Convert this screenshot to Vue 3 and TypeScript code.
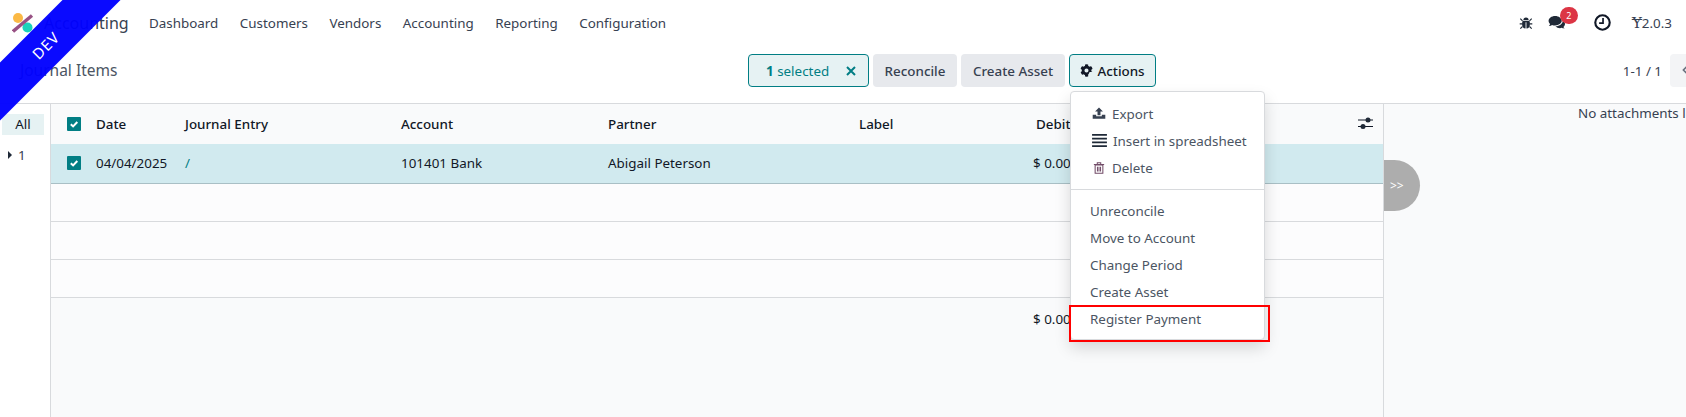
<script setup lang="ts">
const menu = ['Dashboard', 'Customers', 'Vendors', 'Accounting', 'Reporting', 'Configuration']
const emptyRows = [1, 2, 3]
const lowerActions = ['Unreconcile', 'Move to Account', 'Change Period', 'Create Asset', 'Register Payment']
</script>

<template>
  <div class="page">
    <div class="ribbon">DEV</div>

    <header class="navbar">
      <svg class="logo" viewBox="0 0 22 22" width="22" height="22">
        <circle cx="6" cy="6" r="5" fill="#fbb945" />
        <circle cx="15.5" cy="15.5" r="5" fill="#1ad3bb" />
        <path d="M1 19.5 20 3.5" stroke="#985184" stroke-width="3.4" />
      </svg>
      <span class="app-name">Accounting</span>
      <nav class="menu">
        <a v-for="item in menu" :key="item">{{ item }}</a>
      </nav>
      <div class="systray">
        <svg class="bug" viewBox="0 0 16 16" width="14" height="14">
          <path d="M5 4.6a3 3 0 0 1 6 0zM4.2 5.5h7.6c.5 1 .7 2.2.7 3.5 0 2.8-1.3 5-4 5.3V7H7.5v7.3c-2.7-.3-4-2.500-4-5.300 0-1.300.2-2.500.7-3.500z" fill="#1f2937" />
          <path d="M1.500 3 4 5.500M14.500 3 12 5.500M.8 9h3M15.200 9h-3M1.500 14.500 4 12M14.500 14.500 12 12" stroke="#1f2937" stroke-width="1.300" fill="none" />
        </svg>
        <span class="chat">
          <svg viewBox="0 0 20 16" width="19" height="15">
            <path d="M7.500 1C3.600 1 .5 3.300.5 6.200c0 1.300.6 2.400 1.600 3.300-.2.900-.8 1.700-1.300 2.300 1.300 0 2.500-.6 3.300-1.200 1.100.4 2.300.6 3.400.6 3.900 0 7-2.300 7-5C14.500 3.300 11.400 1 7.500 1z" fill="#1f2937" />
            <path d="M15.800 5.500c.1 3.600-3.500 6.300-8 6.500 1.200 1.300 3 2 4.800 2 .7 0 1.400-.1 2-.3.700.5 1.800 1 3 1-.5-.5-1-1.200-1.200-2 1-.8 1.600-1.900 1.600-3 0-1.700-.9-3.100-2.200-4.200z" fill="#1f2937" />
          </svg>
          <b class="badge">2</b>
        </span>
        <svg class="clock" viewBox="0 0 16 16" width="17" height="17">
          <circle cx="8" cy="8" r="6.800" fill="none" stroke="#111827" stroke-width="2" />
          <path d="M8.500 3.800v4.800H4.800" fill="none" stroke="#111827" stroke-width="1.600" />
        </svg>
        <span class="version"><i>Ɏ</i>2.0.3</span>
      </div>
    </header>

    <section class="control-panel">
      <div class="breadcrumb">Journal Items</div>
      <div class="actions-bar">
        <div class="selected-box">
          <span><b>1</b> selected</span>
          <svg viewBox="0 0 10 10" width="10" height="10">
            <path d="M1 1l8 8M9 1 1 9" stroke="#017e84" stroke-width="2" />
          </svg>
        </div>
        <button class="btn btn-reconcile">Reconcile</button>
        <button class="btn btn-asset">Create Asset</button>
        <button class="btn btn-actions">
          <svg viewBox="0 0 512 512" width="13" height="13">
            <path d="M487 315l-42-25a190 190 0 0 0 0-68l42-25c5-3 7-9 5-14-11-35-30-67-54-93-4-4-10-5-15-2l-42 24a187 187 0 0 0-59-34V30c0-6-4-11-9-12a223 223 0 0 0-107 0c-5 1-9 6-9 12v48a193 193 0 0 0-59 34l-42-24c-5-3-11-2-15 2-24 26-43 58-54 93-2 5 0 11 5 14l42 25a190 190 0 0 0 0 68l-42 25c-5 3-7 9-5 14 11 35 30 67 54 93 4 4 10 5 15 2l42-24a187 187 0 0 0 59 34v48c0 6 4 11 9 12a223 223 0 0 0 107 0c5-1 9-6 9-12v-48a193 193 0 0 0-59-34l42 24c5 3 11 2 15-2 24-26 43-58 54-93 2-5 0-11-5-14zM256 336a80 80 0 1 1 0-160 80 80 0 0 1 0 160z" fill="#111827" />
          </svg>
          Actions
        </button>
      </div>
      <div class="pager">
        <span>1-1 / 1</span>
        <button class="pager-btn">
          <svg viewBox="0 0 8 12" width="7" height="10">
            <path d="M6.500 1 1.500 6l5 5" fill="none" stroke="#6b7280" stroke-width="2" />
          </svg>
        </button>
      </div>
    </section>

    <main class="content">
      <aside class="search-panel">
        <div class="panel-all">All</div>
        <div class="panel-item"><span class="caret"></span>1</div>
      </aside>

      <div class="list">
        <div class="row head">
          <span class="check"><svg viewBox="0 0 14 14" width="14" height="14"><path d="M3.800 7.200l2.300 2.200 4.200-4.400" fill="none" stroke="#fff" stroke-width="2" /></svg></span>
          <span>Date</span>
          <span>Journal Entry</span>
          <span>Account</span>
          <span>Partner</span>
          <span>Label</span>
          <span>Debit</span>
          <svg class="sliders" viewBox="0 0 15 14" width="15" height="14">
            <path d="M0 4h15M0 10.500h15" stroke="#111827" stroke-width="1" />
            <circle cx="10" cy="4" r="2.500" fill="#1f2937" />
            <circle cx="5" cy="10.500" r="2.500" fill="#1f2937" />
          </svg>
        </div>
        <div class="row selected">
          <span class="check"><svg viewBox="0 0 14 14" width="14" height="14"><path d="M3.800 7.200l2.300 2.200 4.200-4.400" fill="none" stroke="#fff" stroke-width="2" /></svg></span>
          <span>04/04/2025</span>
          <span class="link">/</span>
          <span>101401 Bank</span>
          <span>Abigail Peterson</span>
          <span></span>
          <span class="amount">$ 0.00</span>
        </div>
        <div v-for="n in emptyRows" :key="n" class="row empty"></div>
        <div class="row totals">
          <span></span><span></span><span></span><span></span><span></span><span></span>
          <span class="amount">$ 0.00</span>
        </div>
      </div>

      <aside class="attachments">
        <div class="no-attachments">No attachments loaded</div>
        <div class="toggle">&gt;&gt;</div>
      </aside>
    </main>

    <div class="dropdown">
      <a class="dd-item">
        <svg viewBox="0 0 16 14" width="14" height="13">
          <path d="M8 0l4.500 4.800H9.700V9H6.300V4.800H3.500zM.8 8.500h4v1.700h6.400V8.500h4V13H.8z" fill="#374151" />
        </svg>
        Export
      </a>
      <a class="dd-item">
        <svg viewBox="0 0 16 14" width="15" height="13">
          <path d="M0 1h16M0 5h16M0 9h16M0 13h16" stroke="#1f2937" stroke-width="2" />
        </svg>
        Insert in spreadsheet
      </a>
      <a class="dd-item">
        <svg viewBox="0 0 14 14" width="14" height="12">
          <path d="M2.500 3.500h9V13h-9zM1 3h12M5 3V1h4v2M5.200 5.500V11M7 5.500V11M8.800 5.500V11" fill="none" stroke="#714b67" stroke-width="1.200" />
        </svg>
        Delete
      </a>
      <div class="dd-divider"></div>
      <a v-for="item in lowerActions" :key="item" class="dd-item plain">{{ item }}</a>
    </div>

    <div class="highlight"></div>
  </div>
</template>

<style>
html, body {
  margin: 0;
  background: #fff;
}
</style>

<style scoped>
.page {
  position: relative;
  width: 1686px;
  height: 417px;
  overflow: hidden;
  display: flex;
  flex-direction: column;
  background: #fff;
  color: #374151;
  font-family: "Noto Sans", sans-serif;
  font-size: 13.4px;
}

.ribbon {
  position: absolute;
  top: 25px;
  left: -74px;
  width: 240px;
  height: 41px;
  line-height: 41px;
  text-align: center;
  background: rgba(0, 0, 255, 0.96);
  color: #fff;
  font-size: 15px;
  letter-spacing: 1px;
  transform: rotate(-45deg);
  z-index: 5;
}

.navbar {
  height: 45px;
  flex: none;
  display: flex;
  align-items: center;
  padding-left: 12px;
}

.logo {
  flex: none;
}

.app-name {
  margin-left: 10px;
  width: 105px;
  font-size: 16px;
}

.menu {
  display: flex;
  gap: 21.5px;
  color: #374151;
}

.systray {
  margin-left: auto;
  display: flex;
  align-items: center;
  padding-right: 14px;
}

.bug {
  margin-right: 15px;
}

.chat {
  position: relative;
  display: flex;
  margin-right: 27px;
}

.badge {
  position: absolute;
  top: -8px;
  left: 12px;
  width: 18px;
  height: 17px;
  border-radius: 9px;
  background: #dc3545;
  color: #fff;
  font-size: 9px;
  font-weight: 400;
  line-height: 17px;
  text-align: center;
}

.clock {
  margin-right: 21px;
}

.version i {
  font-family: "DejaVu Serif", serif;
  font-style: normal;
  font-size: 15px;
}

.control-panel {
  height: 58px;
  flex: none;
  position: relative;
  display: flex;
  align-items: flex-start;
  padding: 9px 0 0 20px;
  box-sizing: border-box;
}

.breadcrumb {
  width: 728px;
  line-height: 33px;
  font-size: 15.500px;
  color: #4b5563;
}

.actions-bar {
  display: flex;
  gap: 4px;
  height: 33px;
}

.selected-box {
  box-sizing: border-box;
  width: 121px;
  display: flex;
  align-items: center;
  justify-content: space-between;
  padding: 0 12px 0 17px;
  border: 1px solid #017e84;
  border-radius: 4px;
  background: #e6f2f3;
  color: #017e84;
}

.selected-box b {
  font-weight: 700;
}

.btn {
  height: 33px;
  padding: 0;
  border: 0;
  border-radius: 4px;
  background: #e7e9ed;
  color: #374151;
  font: inherit;
  font-weight: 500;
}

.btn-reconcile {
  width: 84px;
}

.btn-asset {
  width: 104px;
}

.btn-actions {
  width: 87px;
  display: flex;
  align-items: center;
  justify-content: center;
  gap: 4px;
  box-sizing: border-box;
  border: 1px solid #017e84;
  background: #e6f2f3;
  color: #111827;
}

.pager {
  margin-left: auto;
  display: flex;
  align-items: center;
  height: 33px;
  gap: 8px;
}

.pager-btn {
  width: 16px;
  height: 33px;
  padding: 0 0 0 12px;
  border: 0;
  border-radius: 4px 0 0 4px;
  background: #f3f4f6;
  text-align: left;
  overflow: hidden;
}

.content {
  flex: 1;
  display: flex;
  min-height: 0;
  border-top: 1px solid #d8dadd;
}

.search-panel {
  flex: none;
  box-sizing: border-box;
  width: 51px;
  padding: 10px 2px;
  border-right: 1px solid #d8dadd;
  color: #111827;
}

.panel-all {
  width: 42px;
  height: 21px;
  line-height: 21px;
  text-align: center;
  background: #e6f2f3;
}

.panel-item {
  display: flex;
  align-items: center;
  gap: 6px;
  margin-top: 11px;
  padding-left: 6px;
  color: #374151;
}

.caret {
  border-left: 4px solid #1f2937;
  border-top: 4px solid transparent;
  border-bottom: 4px solid transparent;
}

.list {
  flex: 1;
  min-width: 0;
  background: #f9fafb;
  color: #111827;
}

.row {
  display: grid;
  grid-template-columns: 29px 89px 216px 207px 251px 177px 1fr;
  align-items: center;
  box-sizing: border-box;
  height: 38px;
  padding-left: 16px;
  border-bottom: 1px solid #d8dadd;
}

.head {
  position: relative;
  height: 40px;
  border-bottom: 0;
  font-weight: 500;
}

.selected {
  height: 40px;
  padding-bottom: 2px;
  background: #d1eaef;
  border-bottom-color: #a9bfc5;
}

.empty {
  background: #fcfcfd;
}

.totals {
  border-bottom: 0;
  height: 42px;
}

.amount {
  margin-left: -3px;
}

.check {
  width: 14px;
  height: 14px;
  display: block;
  background: #017e84;
  border-radius: 1px;
}

.check svg {
  display: block;
}

.link {
  color: #017e84;
}

.sliders {
  position: absolute;
  right: 10px;
  top: 12px;
}

.attachments {
  flex: none;
  position: relative;
  box-sizing: border-box;
  width: 303px;
  border-left: 1px solid #d8dadd;
  background: #f9fafb;
  overflow: hidden;
}

.no-attachments {
  position: absolute;
  top: 0;
  left: 194px;
  white-space: nowrap;
}

.toggle {
  position: absolute;
  top: 56px;
  left: 0;
  width: 36px;
  height: 51px;
  padding-left: 6px;
  box-sizing: border-box;
  border-radius: 0 26px 26px 0;
  background: #adadad;
  color: #fff;
  font-size: 12px;
  line-height: 51px;
}

.dropdown {
  position: absolute;
  top: 91px;
  left: 1070px;
  box-sizing: border-box;
  width: 195px;
  height: 249px;
  padding-top: 8px;
  background: #fff;
  border: 1px solid #d8dadd;
  border-radius: 4px;
  box-shadow: 0 8px 16px rgba(0, 0, 0, 0.15);
  z-index: 3;
}

.dd-item {
  display: flex;
  align-items: center;
  gap: 6px;
  height: 27px;
  padding-left: 21px;
  color: #4b5563;
}

.dd-item.plain {
  padding-left: 19px;
}

.dd-divider {
  margin: 8px 0 7px;
  border-top: 1px solid #d8dadd;
}

.highlight {
  position: absolute;
  top: 305px;
  left: 1069px;
  box-sizing: border-box;
  width: 201px;
  height: 37px;
  border: 2px solid #f00;
  z-index: 4;
}
</style>
